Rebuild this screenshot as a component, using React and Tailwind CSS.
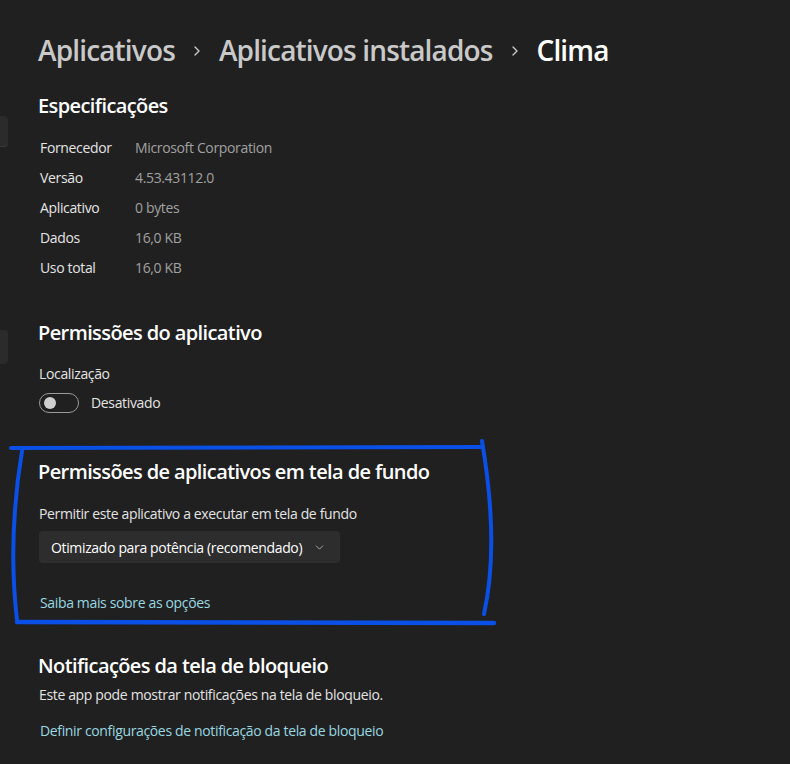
import React from 'react';
import { ChevronRight, ChevronDown } from 'lucide-react';

const specs = [
    { label: 'Fornecedor', value: 'Microsoft Corporation' },
    { label: 'Versão', value: '4.53.43112.0' },
    { label: 'Aplicativo', value: '0 bytes' },
    { label: 'Dados', value: '16,0 KB' },
    { label: 'Uso total', value: '16,0 KB' },
];

const SectionTitle = ({ children }) => (
    <h2 className="text-[20px] leading-[28px] font-semibold text-white tracking-[-0.6px]">{children}</h2>
);

const App = () => {
    return (
        <div
            className="relative w-[790px] h-[764px] overflow-hidden bg-[#202020] text-[#e4e4e4] tracking-[-0.35px]"
            style={{ fontFamily: '"Open Sans", "Noto Sans", sans-serif' }}
        >
            {/* clipped buttons of the nav pane */}
            <div className="absolute left-[-10px] top-[116px] w-[18px] h-[31px] rounded-[4px] bg-[#2b2b2b] border-b border-[#3a3a3a]" />
            <div className="absolute left-[-10px] top-[330px] w-[18px] h-[34px] rounded-[4px] bg-[#2b2b2b]" />

            <div className="pl-[38px] pt-[32px]">
                {/* Breadcrumb */}
                <div className="flex items-center text-[28px] leading-[36px] font-semibold tracking-[-0.85px]">
                    <span className="text-[#c9c9c9]">Aplicativos</span>
                    <ChevronRight size={16} strokeWidth={2} className="text-[#c9c9c9] mx-[14px] mt-[2px]" />
                    <span className="text-[#c9c9c9]">Aplicativos instalados</span>
                    <ChevronRight size={16} strokeWidth={2} className="text-[#c9c9c9] mx-[14px] mt-[2px]" />
                    <span className="text-white">Clima</span>
                </div>

                {/* Especificações */}
                <div className="mt-[24px]">
                    <SectionTitle>Especificações</SectionTitle>
                    <div className="mt-[12px] pl-[2px] flex flex-col">
                        {specs.map(s => (
                            <div key={s.label} className="flex h-[30px] items-center text-[14px]">
                                <span className="w-[95px] text-[#e4e4e4]">{s.label}</span>
                                <span className="text-[#a0a0a0]">{s.value}</span>
                            </div>
                        ))}
                    </div>
                </div>

                {/* Permissões do aplicativo */}
                <div className="mt-[37px]">
                    <SectionTitle>Permissões do aplicativo</SectionTitle>
                    <div className="mt-[16px] pl-[1px] text-[14px] text-[#e4e4e4]">Localização</div>
                    <div className="mt-[8px] pl-[1px] flex items-center gap-[12px]">
                        <div className="w-[40px] h-[20px] rounded-full border border-[#9a9a9a] flex items-center px-[4px]">
                            <div className="w-[12px] h-[12px] rounded-full bg-[#cfcfcf]" />
                        </div>
                        <span className="text-[14px] text-[#e4e4e4]">Desativado</span>
                    </div>
                </div>

                {/* Permissões em tela de fundo */}
                <div className="mt-[45px]">
                    <SectionTitle>Permissões de aplicativos em tela de fundo</SectionTitle>
                    <div className="mt-[17px] pl-[1px] text-[14px] text-[#e4e4e4]">Permitir este aplicativo a executar em tela de fundo</div>
                    <div className="mt-[7px] ml-[1px] w-[301px] h-[32px] rounded-[4px] bg-[#2d2d2d] flex items-center justify-between pl-[12px] pr-[14px] text-[14px] text-white whitespace-nowrap">
                        <span>Otimizado para potência (recomendado)</span>
                        <ChevronDown size={13} strokeWidth={1.5} className="text-[#bdbdbd] shrink-0" />
                    </div>
                    <div className="mt-[29px] pl-[2px] text-[14px] text-[#99d8e0]">Saiba mais sobre as opções</div>
                </div>

                {/* Notificações */}
                <div className="mt-[39px]">
                    <SectionTitle>Notificações da tela de bloqueio</SectionTitle>
                    <div className="mt-[4px] pl-[1px] text-[14px] text-[#e4e4e4]">Este app pode mostrar notificações na tela de bloqueio.</div>
                    <div className="mt-[15px] pl-[2px] text-[14px] text-[#99d8e0]">Definir configurações de notificação da tela de bloqueio</div>
                </div>
            </div>

            {/* hand-drawn annotation */}
            <svg className="absolute inset-0 pointer-events-none" width="790" height="764" viewBox="0 0 790 764" fill="none">
                <g stroke="#0a4fe6" strokeWidth="4" strokeLinecap="round" strokeLinejoin="round">
                    <path d="M11 448 L483 447" />
                    <path d="M482 441 C492 500 496 560 484 614" />
                    <path d="M22 451 C14 500 10 560 17 620" />
                    <path d="M17 622 L494 623" strokeWidth="4.5" />
                </g>
            </svg>
        </div>
    );
};

export default App;
